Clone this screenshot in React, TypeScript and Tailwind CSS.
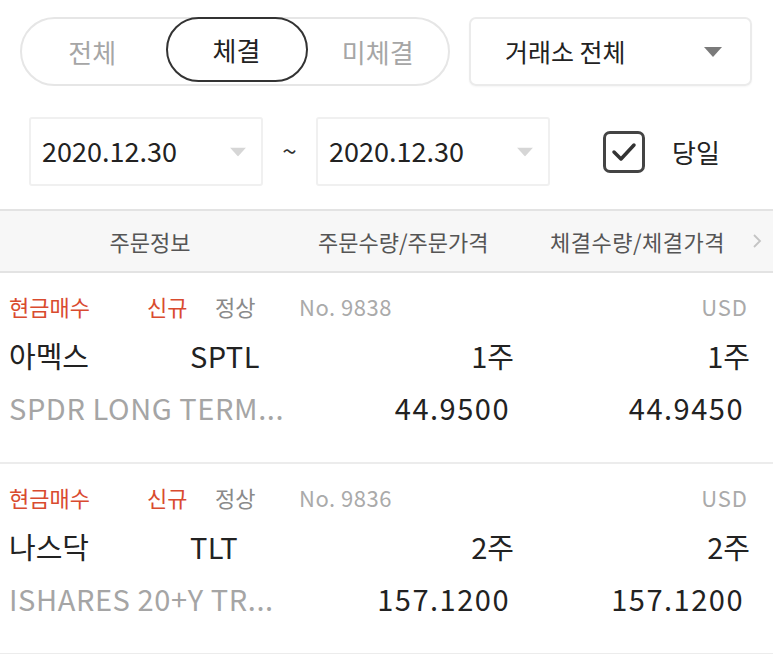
import React, { useState } from 'react';

type Order = {
  no: string;
  name: string;
  symbol: string;
  fullName: string;
  qty: string;
  filledQty: string;
  price: string;
  filledPrice: string;
};

const orders: Order[] = [
  { no: '9838', name: '아멕스', symbol: 'SPTL', fullName: 'SPDR LONG TERM...', qty: '1주', filledQty: '1주', price: '44.9500', filledPrice: '44.9450' },
  { no: '9836', name: '나스닥', symbol: 'TLT', fullName: 'ISHARES 20+Y TR...', qty: '2주', filledQty: '2주', price: '157.1200', filledPrice: '157.1200' },
];

const Caret = ({ className }: { className?: string }) => (
  <svg width="18" height="10" viewBox="0 0 18 10" className={className}>
    <path d="M0 0 L18 0 L9 10 Z" fill="currentColor" />
  </svg>
);

const OrderRow: React.FC<{ order: Order }> = ({ order }) => (
  <div className="border-b-2 border-[#ececec] pt-[18px] pb-[28px]">
    <div className="flex items-center h-[30px] text-[22px]">
      <span className="w-[147px] pl-[9px] text-[#d94b2f]">현금매수</span>
      <span className="w-[68px] text-[#d94b2f]">신규</span>
      <span className="w-[84px] text-[#8a8a8a]">정상</span>
      <span className="whitespace-nowrap text-[#aaaaaa] tracking-[0.5px]">No. {order.no}</span>
      <span className="flex-1 text-right pr-[25px] text-[#aaaaaa] tracking-[1px]">USD</span>
    </div>
    <div className="grid grid-cols-[181px_333px_236px] items-center h-[50px] mt-[10px] text-[29px] text-[#222]">
      <span className="pl-[9px]">{order.name}</span>
      <span className="flex justify-between">
        <span className="pl-[9px] tracking-[0.5px]">{order.symbol}</span>
        <span>{order.qty}</span>
      </span>
      <span className="text-right">{order.filledQty}</span>
    </div>
    <div className="grid grid-cols-[290px_220px_234px] items-center h-[52px] mt-[1px] text-[29px]">
      <span className="pl-[9px] whitespace-nowrap text-[#a5a5a5] tracking-[0.6px]">{order.fullName}</span>
      <span className="text-right text-[#222] tracking-[1.5px]">{order.price}</span>
      <span className="text-right text-[#222] tracking-[1.5px]">{order.filledPrice}</span>
    </div>
  </div>
);

export default function App() {
  const [tab, setTab] = useState('체결');
  const [today, setToday] = useState(true);

  return (
    <div className="w-[773px] h-[654px] overflow-hidden bg-white" style={{ fontFamily: '"Noto Sans CJK KR", "Noto Sans", sans-serif' }}>
      <div className="flex items-center gap-[19px] pt-[17px] pl-[20px] pr-[21px]">
        <div className="flex h-[69px] w-[430px] rounded-full border-2 border-[#e6e6e6]">
          {['전체', '체결', '미체결'].map((t) => (
            <button
              key={t}
              onClick={() => setTab(t)}
              className={
                'h-full text-[26px] ' +
                (t === tab
                  ? 'w-[142px] ml-[3px] -my-[2px] h-[69px] rounded-full border-2 border-[#333] text-[#222]'
                  : 'flex-1 text-[#a6a6a6]')
              }
            >
              {t}
            </button>
          ))}
        </div>
        <div className="flex h-[69px] flex-1 items-center justify-between rounded-[7px] border-2 border-[#ebebeb] pl-[34px] pr-[28px] shadow-[0_1px_2px_rgba(0,0,0,0.04)]">
          <span className="text-[25px] text-[#222]">거래소 전체</span>
          <Caret className="text-[#7a7a7a]" />
        </div>
      </div>

      <div className="flex items-center pt-[31px] pl-[29px]">
        <div className="flex h-[69px] w-[234px] items-center justify-between rounded-[3px] border-2 border-[#f0f0f0] pl-[11px] pr-[14px]">
          <span className="text-[27px] text-[#222]">2020.12.30</span>
          <Caret className="text-[#d6d6d6] scale-90" />
        </div>
        <span className="w-[53px] -mt-[4px] text-center text-[26px] text-[#333]">~</span>
        <div className="flex h-[69px] w-[234px] items-center justify-between rounded-[3px] border-2 border-[#f0f0f0] pl-[11px] pr-[14px]">
          <span className="text-[27px] text-[#222]">2020.12.30</span>
          <Caret className="text-[#d6d6d6] scale-90" />
        </div>
        <button onClick={() => setToday(!today)} className="ml-[53px] flex items-center gap-[27px]">
          <span className="flex h-[42px] w-[42px] items-center justify-center rounded-[7px] border-[3px] border-[#444]">
            {today && (
              <svg width="28" height="24" viewBox="0 0 28 24">
                <path d="M4 12 L11 19 L24 5" fill="none" stroke="#333" strokeWidth="3.5" strokeLinecap="round" strokeLinejoin="round" />
              </svg>
            )}
          </span>
          <span className="text-[26px] text-[#222]">당일</span>
        </button>
      </div>

      <div className="mt-[23px] flex h-[64px] items-center border-y-2 border-[#e3e3e3] bg-[#f7f7f7] text-[22px] text-[#555]">
        <span className="w-[300px] text-center">주문정보</span>
        <span className="ml-[18px] w-[232px] whitespace-nowrap">주문수량/주문가격</span>
        <span className="w-[196px] whitespace-nowrap tracking-[0.5px]">체결수량/체결가격</span>
        <svg width="10" height="16" viewBox="0 0 10 16" className="ml-[6px]">
          <path d="M2 2 L8 8 L2 14" fill="none" stroke="#c4c4c4" strokeWidth="1.8" />
        </svg>
      </div>

      {orders.map((o) => (
        <OrderRow key={o.no} order={o} />
      ))}
    </div>
  );
}
